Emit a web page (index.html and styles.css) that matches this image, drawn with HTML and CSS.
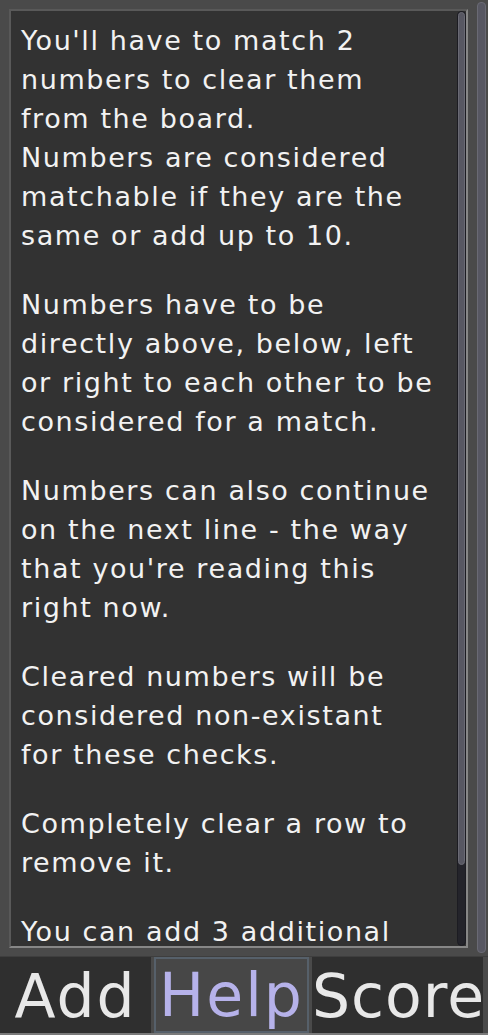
FILE: index.html
```html
<!DOCTYPE html>
<html>
<head>
<meta charset="utf-8">
<link rel="stylesheet" href="styles.css">
</head>
<body>
<div class="app">
  <div class="top">
    <div class="panel">
      <div class="text">
        <p>You'll have to match 2<br>numbers to clear them<br>from the board.<br>Numbers are considered<br>matchable if they are the<br>same or add up to 10.</p>
        <p>Numbers have to be<br>directly above, below, left<br>or right to each other to be<br>considered for a match.</p>
        <p>Numbers can also continue<br>on the next line - the way<br>that you're reading this<br>right now.</p>
        <p>Cleared numbers will be<br>considered non-existant<br>for these checks.</p>
        <p>Completely clear a row to<br>remove it.</p>
        <p>You can add 3 additional<br>times per game.</p>
      </div>
      <div class="vscroll inner"><div class="grab inner-grab"></div></div>
    </div>
    <div class="vscroll outer"><div class="grab"></div></div>
  </div>
  <div class="bar">
    <div class="btn">Add</div>
    <div class="btn active">Help</div>
    <div class="btn score">Score</div>
  </div>
</div>
</body>
</html>
```
FILE: styles.css
```css
html, body {
  margin: 0;
  padding: 0;
  background: #4a4a4a;
}
.app {
  width: 488px;
  height: 1035px;
  display: flex;
  flex-direction: column;
  overflow: hidden;
  font-family: "DejaVu Sans", sans-serif;
}
.top {
  height: 957px;
  display: flex;
  padding-left: 9px;
  box-sizing: border-box;
}
.panel {
  margin-top: 9px;
  width: 459px;
  height: 939px;
  box-sizing: border-box;
  background: #323232;
  border-top: 2px solid #595959;
  border-left: 2px solid #595959;
  border-right: 2px solid #878787;
  border-bottom: 2px solid #878787;
  display: flex;
  overflow: hidden;
}
.text {
  flex: 1;
  padding: 10px 0 0 10px;
  color: #f2f2f2;
  font-size: 27px;
  letter-spacing: 1.6px;
  line-height: 39px;
  overflow: hidden;
  white-space: nowrap;
}
.text p {
  margin: 0 0 30px 0;
}
.vscroll {
  width: 9px;
  box-sizing: border-box;
  border-radius: 5px;
  display: flex;
  flex-direction: column;
}
.inner {
  height: 100%;
  background: #24242b;
  border: 1px solid #1c1c22;
}
.inner-grab {
  height: 853px;
}
.grab {
  background: #575762;
  border-radius: 4px;
  border: 1px solid #6a6a74;
  box-sizing: border-box;
}
.outer {
  margin-left: 9px;
  margin-top: 2px;
  height: 951px;
}
.outer .grab {
  height: 100%;
}
.bar {
  height: 76px;
  display: flex;
  gap: 3px;
  border-top: 1px solid #3e3e3e;
  border-bottom: 2px solid #7a7a7a;
}
.btn {
  background: #2f2f2f;
  color: #e8e8e8;
  font-size: 60px;
  letter-spacing: 2px;
  line-height: 74px;
  padding-top: 2px;
  height: 76px;
  width: 151px;
  text-align: center;
  overflow: hidden;
  white-space: nowrap;
  box-sizing: border-box;
}
.btn.active {
  width: 155px;
  background: #474747;
  border: 2px solid #56606a;
  padding-top: 0;
  color: #b6b2ea;
  line-height: 72px;
}
.btn.score {
  width: 171px;
  text-align: left;
  letter-spacing: 1px;
}
```
